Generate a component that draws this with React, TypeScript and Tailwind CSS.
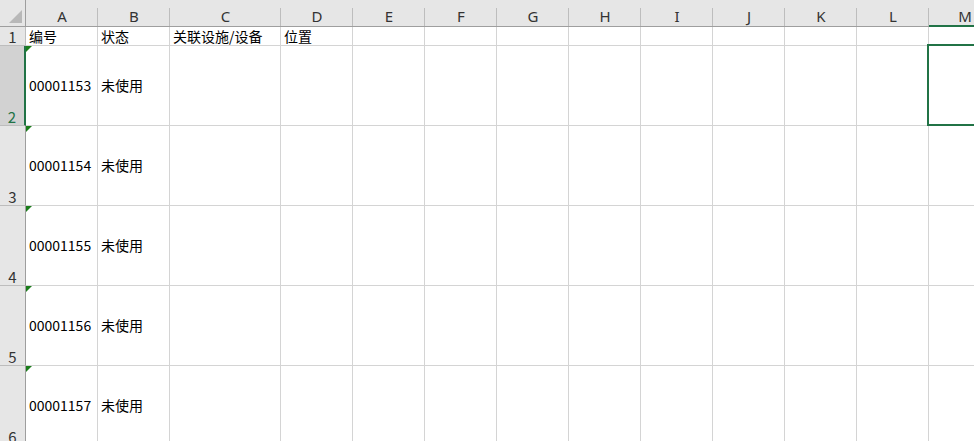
import React from 'react';

const cols = ['A', 'B', 'C', 'D', 'E', 'F', 'G', 'H', 'I', 'J', 'K', 'L', 'M'];

const rows = [
    { id: '00001153' },
    { id: '00001154' },
    { id: '00001155' },
    { id: '00001156' },
    { id: '00001157' },
];

const font = { fontFamily: '"Noto Sans CJK SC", "Noto Sans", sans-serif' };

const App: React.FC = () => {
    return (
        <div className="w-[974px] h-[441px] overflow-hidden bg-white text-[14px] text-black" style={font}>
            <div className="grid grid-cols-[26px_72px_72px_111px_72px_72px_72px_72px_72px_72px_72px_72px_72px_72px] grid-rows-[27px_19px_80px_80px_80px_80px_80px]">
                {/* corner */}
                <div className="relative bg-[#e6e6e6] border-b border-r border-[#9e9e9e]">
                    <div className="absolute right-[3px] bottom-[3px] w-0 h-0 border-l-[13px] border-l-transparent border-b-[13px] border-b-[#b8b8b8]" />
                </div>
                {cols.map((c) => (
                    <div
                        key={c}
                        className={`relative bg-[#e6e6e6] flex items-end justify-center leading-none text-[15px] text-[#333] ${c === 'M' ? 'border-b-2 border-[#217346]' : 'border-b border-[#9e9e9e]'}`}
                        style={{ fontFamily: '"Noto Sans", sans-serif' }}
                    >
                        <span className={c === 'M' ? 'mb-[1px]' : 'mb-[2px]'}>{c}</span>
                        <div className="absolute right-0 top-[8px] bottom-0 w-px bg-[#bdbdbd]" />
                    </div>
                ))}

                {/* row 1 */}
                <div className="bg-[#e6e6e6] border-r border-b border-[#bdbdbd] flex items-end justify-center text-[15px] text-[#333] leading-none pb-[1px]">1</div>
                {cols.map((c, i) => (
                    <div key={c} className="border-r border-b border-[#d4d4d4] pl-[3px] leading-[18px] whitespace-nowrap">
                        {i === 0 ? '编号' : i === 1 ? '状态' : i === 2 ? '关联设施/设备' : i === 3 ? '位置' : ''}
                    </div>
                ))}

                {rows.map((r, ri) => (
                    <React.Fragment key={r.id}>
                        <div
                            className={`border-b flex items-end justify-center text-[15px] leading-none pb-[1px] ${ri === 0 ? 'bg-[#d2d2d2] text-[#217346] border-r-2 border-r-[#217346] border-b-[#bdbdbd]' : 'bg-[#e6e6e6] text-[#333] border-r border-r-[#9e9e9e] border-b-[#bdbdbd]'}`}
                        >
                            {ri + 2}
                        </div>
                        {cols.map((c, i) => (
                            <div key={c} className="relative border-r border-b border-[#d4d4d4] flex items-center pl-[3px] whitespace-nowrap">
                                {i === 0 && (
                                    <>
                                        <div className="absolute left-0 top-0 w-0 h-0 border-t-[6px] border-t-[#1a7d1a] border-r-[6px] border-r-transparent" />
                                        <span>{r.id}</span>
                                    </>
                                )}
                                {i === 1 && <span>未使用</span>}
                                {c === 'M' && ri === 0 && (
                                    <div className="absolute -left-[2px] -top-[2px] -bottom-[1px] -right-[1px] border-2 border-[#217346]" />
                                )}
                            </div>
                        ))}
                    </React.Fragment>
                ))}
            </div>
        </div>
    );
};

export default App;
